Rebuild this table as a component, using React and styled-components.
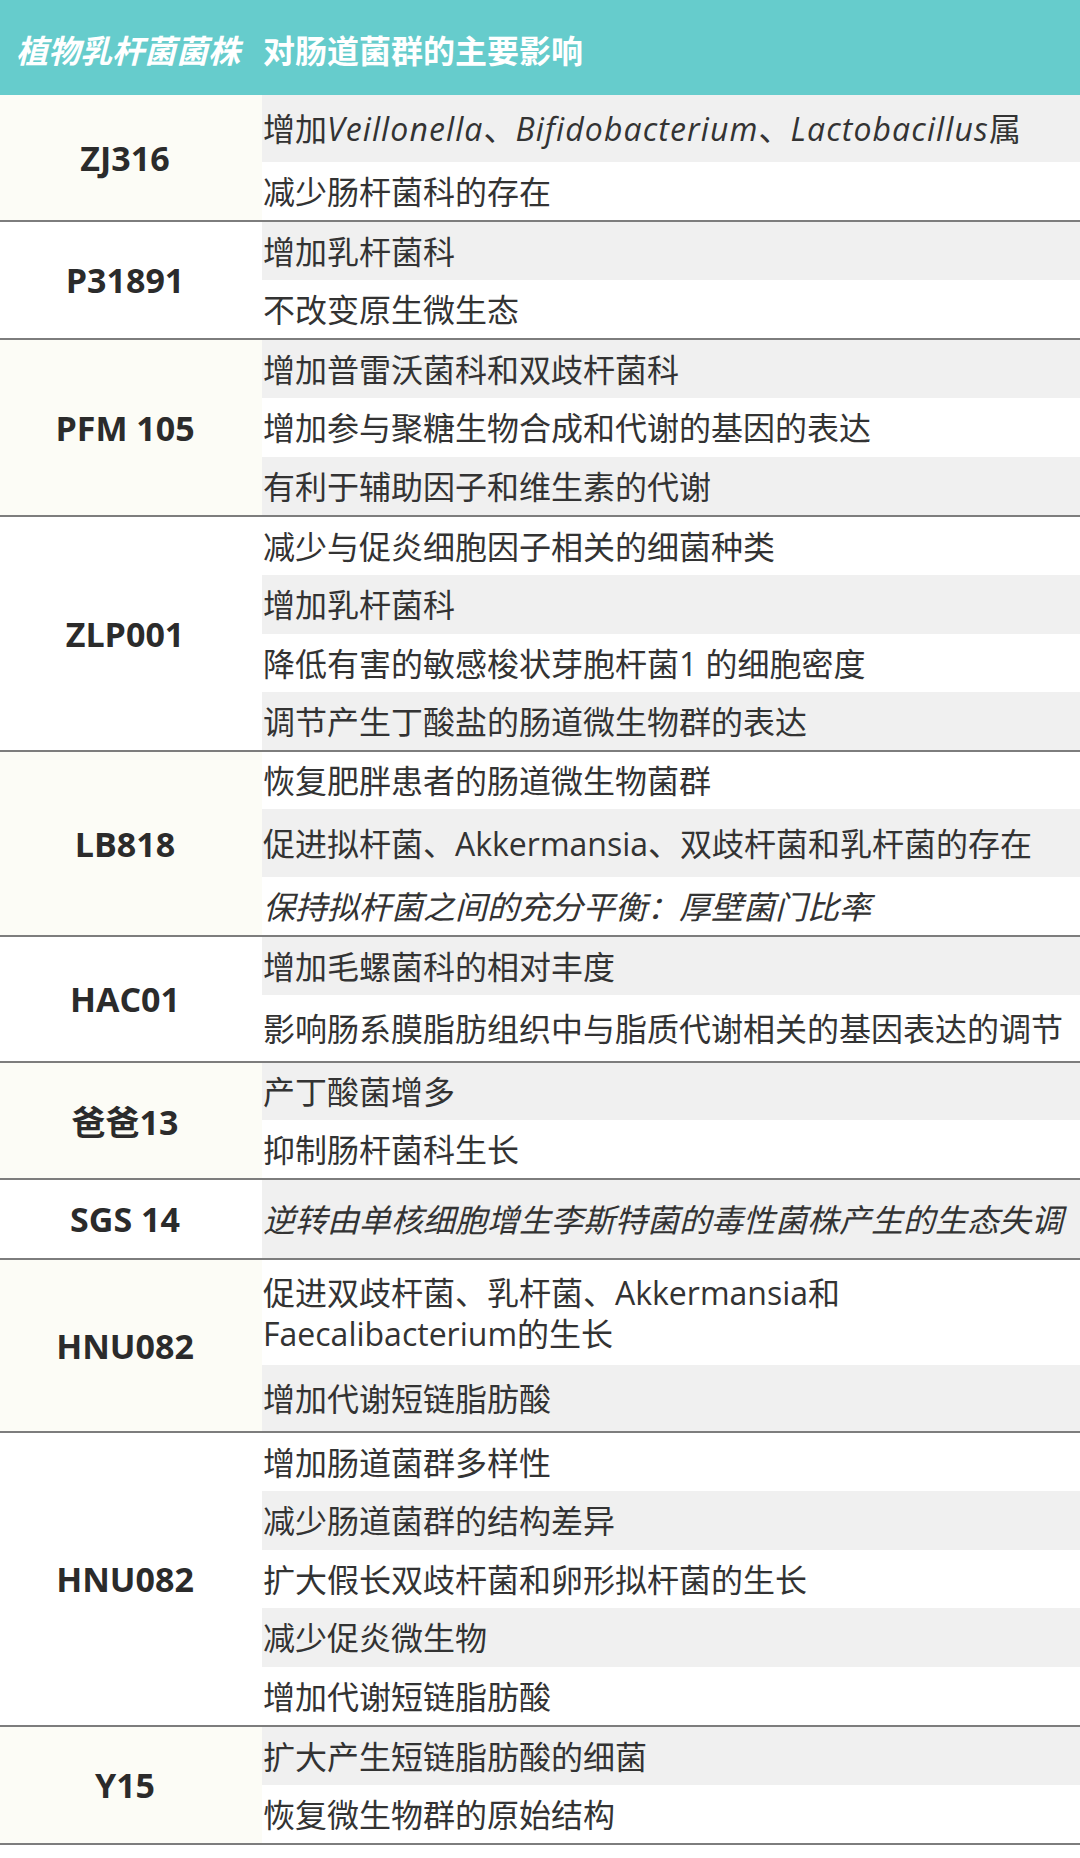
import React from 'react'
import styled, { createGlobalStyle } from 'styled-components'

const FONT = '"Open Sans", "Noto Sans CJK SC", "Noto Sans", sans-serif'

const GlobalStyle = createGlobalStyle`
  html, body {
    margin: 0;
    padding: 0;
    background: #fff;
  }
  body {
    font-family: ${FONT};
    color: #333;
  }
`

const Table = styled.div`
  width: 1080px;
  background: #fff;
`

const HeaderRow = styled.div`
  display: flex;
  align-items: center;
  height: 95px;
  background: #66cccc;
  color: #fff;
  font-size: 32px;
  font-weight: 700;
  padding-top: 2px;
  box-sizing: border-box;
`

const HeaderCell = styled.div`
  flex: ${props => props.$grow ? 1 : '0 0 262px'};
  padding-left: ${props => props.$pad}px;
  box-sizing: border-box;
  font-style: ${props => props.$italic ? 'italic' : 'normal'};
  white-space: nowrap;
`

const Group = styled.div`
  display: flex;
  border-bottom: 2px solid #7d7d7d;
`

const StrainCell = styled.div`
  flex: 0 0 262px;
  display: flex;
  align-items: center;
  justify-content: center;
  padding-right: 12px;
  box-sizing: border-box;
  background: ${props => props.$tint ? '#fcfcf6' : '#ffffff'};
  font-size: 34px;
  font-weight: 700;
  color: #2b2b2b;
  white-space: nowrap;
`

const Effects = styled.div`
  flex: 1;
  display: flex;
  flex-direction: column;
  min-width: 0;
`

const EffectRow = styled.div`
  height: ${props => props.$h}px;
  display: flex;
  align-items: center;
  padding-left: 1px;
  background: ${props => props.$shade ? '#f0f0f0' : '#ffffff'};
  font-size: 32px;
  line-height: 41px;
  color: #333;
  font-style: ${props => props.$italic ? 'italic' : 'normal'};
  white-space: nowrap;
`

// genus names set in italic, a touch wider like the source's Latin face
const Latin = styled.i`
  font-style: italic;
  letter-spacing: 1.1px;
`

const strains = [
  {
    name: 'ZJ316',
    rows: [
      { h: 67, content: <>增加<Latin>Veillonella</Latin>、<Latin>Bifidobacterium</Latin>、<Latin>Lactobacillus</Latin>属</> },
      { h: 58, content: '减少肠杆菌科的存在' }
    ]
  },
  {
    name: 'P31891',
    rows: [
      { h: 58, content: '增加乳杆菌科' },
      { h: 58, content: '不改变原生微生态' }
    ]
  },
  {
    name: 'PFM 105',
    rows: [
      { h: 58, content: '增加普雷沃菌科和双歧杆菌科' },
      { h: 59, content: '增加参与聚糖生物合成和代谢的基因的表达' },
      { h: 58, content: '有利于辅助因子和维生素的代谢' }
    ]
  },
  {
    name: 'ZLP001',
    rows: [
      { h: 58, content: '减少与促炎细胞因子相关的细菌种类' },
      { h: 59, content: '增加乳杆菌科' },
      { h: 58, content: '降低有害的敏感梭状芽胞杆菌1 的细胞密度' },
      { h: 58, content: '调节产生丁酸盐的肠道微生物群的表达' }
    ]
  },
  {
    name: 'LB818',
    rows: [
      { h: 57, content: '恢复肥胖患者的肠道微生物菌群' },
      { h: 68, content: '促进拟杆菌、Akkermansia、双歧杆菌和乳杆菌的存在' },
      { h: 58, content: '保持拟杆菌之间的充分平衡：厚壁菌门比率', italic: true }
    ]
  },
  {
    name: 'HAC01',
    rows: [
      { h: 58, content: '增加毛螺菌科的相对丰度' },
      { h: 66, content: '影响肠系膜脂肪组织中与脂质代谢相关的基因表达的调节' }
    ]
  },
  {
    name: '爸爸13',
    rows: [
      { h: 57, content: '产丁酸菌增多' },
      { h: 58, content: '抑制肠杆菌科生长' }
    ]
  },
  {
    name: 'SGS 14',
    rows: [
      { h: 78, content: '逆转由单核细胞增生李斯特菌的毒性菌株产生的生态失调', italic: true }
    ]
  },
  {
    name: 'HNU082',
    rows: [
      { h: 105, content: <>促进双歧杆菌、乳杆菌、Akkermansia和<br />Faecalibacterium的生长</> },
      { h: 66, content: '增加代谢短链脂肪酸' }
    ]
  },
  {
    name: 'HNU082',
    rows: [
      { h: 58, content: '增加肠道菌群多样性' },
      { h: 59, content: '减少肠道菌群的结构差异' },
      { h: 58, content: '扩大假长双歧杆菌和卵形拟杆菌的生长' },
      { h: 59, content: '减少促炎微生物' },
      { h: 58, content: '增加代谢短链脂肪酸' }
    ]
  },
  {
    name: 'Y15',
    rows: [
      { h: 58, content: '扩大产生短链脂肪酸的细菌' },
      { h: 58, content: '恢复微生物群的原始结构' }
    ]
  }
]

export default function App () {
  let rowIndex = 0

  return (
    <>
      <GlobalStyle />
      <Table>
        <HeaderRow>
          <HeaderCell $pad={16} $italic>植物乳杆菌菌株</HeaderCell>
          <HeaderCell $pad={1} $grow>对肠道菌群的主要影响</HeaderCell>
        </HeaderRow>
        {strains.map((strain, gi) => (
          <Group key={gi}>
            <StrainCell $tint={gi % 2 === 0}>{strain.name}</StrainCell>
            <Effects>
              {strain.rows.map((row, ri) => {
                const shade = rowIndex % 2 === 0
                rowIndex += 1
                return (
                  <EffectRow key={ri} $h={row.h} $shade={shade} $italic={row.italic}>
                    <span>{row.content}</span>
                  </EffectRow>
                )
              })}
            </Effects>
          </Group>
        ))}
      </Table>
    </>
  )
}
